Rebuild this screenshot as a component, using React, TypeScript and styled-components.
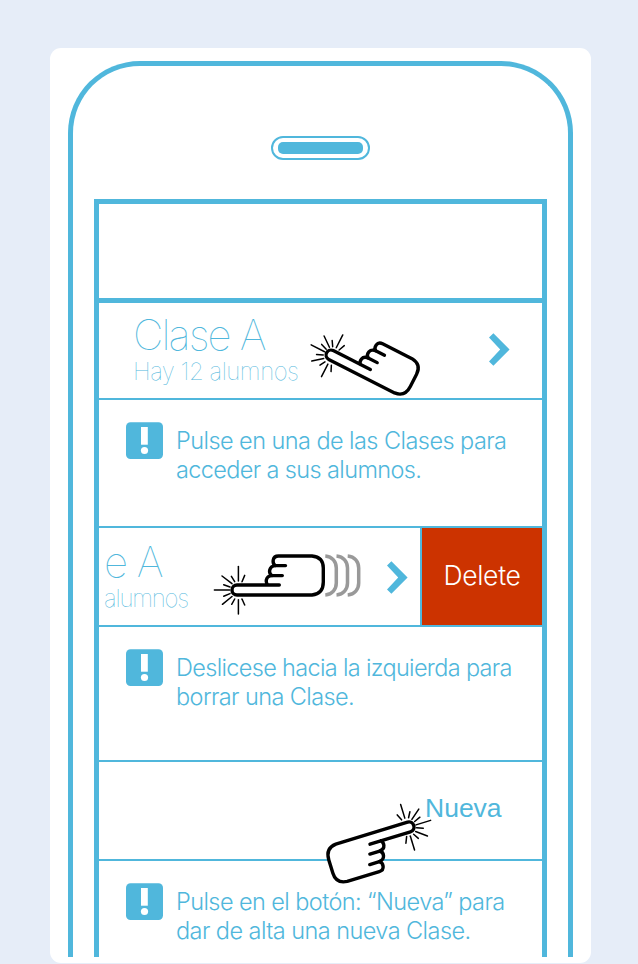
import React from "react";
import styled, { createGlobalStyle } from "styled-components";

const BLUE = "#50b7dc";

const GlobalStyle = createGlobalStyle`
  *, *::before, *::after { box-sizing: border-box; }
  html, body { margin: 0; padding: 0; background: #e6edf8; }
  body { font-family: Inter, "Liberation Sans", sans-serif; color: ${BLUE}; }
`;

const Page = styled.main`
  width: 638px;
  height: 964px;
  padding: 48px 47px 1px 50px;
  background: #e6edf8;
  overflow: hidden;
`;

const Card = styled.section`
  height: 915px;
  padding: 13px 18px 0;
  background: #fff;
  border-radius: 11px;
`;

const Phone = styled.div`
  display: flex;
  flex-direction: column;
  height: 896px;
  padding: 70px 21px 0;
  border: 5px solid ${BLUE};
  border-bottom: 0;
  border-radius: 72px 72px 0 0;
`;

const Speaker = styled.div`
  align-self: center;
  width: 99px;
  height: 24px;
  padding: 4px 5px;
  border: 2px solid ${BLUE};
  border-radius: 12px;
  &::before {
    content: "";
    display: block;
    height: 12px;
    border-radius: 5px;
    background: ${BLUE};
  }
`;

const Screen = styled.div`
  flex: 1;
  margin-top: 39px;
  border: 5px solid ${BLUE};
  border-bottom: 0;
`;

const NavBar = styled.header`
  height: 99px;
  border-bottom: 5px solid ${BLUE};
`;

const Row = styled.div<{ $height: number; $indent?: number }>`
  position: relative;
  display: flex;
  height: ${(p) => p.$height}px;
  padding-left: ${(p) => p.$indent ?? 0}px;
  border-bottom: 2px solid ${BLUE};
`;

const Labels = styled.div`
  flex: 1;
  white-space: nowrap;
`;

const Title = styled.h2<{ $top: number; $spacing: number }>`
  margin: ${(p) => p.$top}px 0 0;
  font-size: 42px;
  line-height: 42px;
  font-weight: 100;
  letter-spacing: ${(p) => p.$spacing}px;
`;

const Subtitle = styled.p<{ $spacing: number }>`
  margin: 2px 0 0;
  font-size: 24px;
  line-height: 28px;
  font-weight: 100;
  letter-spacing: ${(p) => p.$spacing}px;
`;

const ChevronIcon = styled.svg<{ $top: number; $right: number }>`
  flex: none;
  width: 21px;
  height: 33px;
  margin: ${(p) => p.$top}px ${(p) => p.$right}px 0 0;
  fill: ${BLUE};
`;

const DeleteButton = styled.button`
  width: 122px;
  height: 97px;
  padding: 0 0 4px;
  border: 0;
  border-left: 2px solid ${BLUE};
  background: #cc3300;
  color: #fff;
  font: 300 26.5px/30px Inter, "Liberation Sans", sans-serif;
  letter-spacing: -0.3px;
`;

const NewButton = styled.button`
  margin: 30px 0 0;
  padding: 0;
  height: 32px;
  border: 0;
  background: none;
  color: ${BLUE};
  font: 400 26.5px/32px "Liberation Sans", sans-serif;
`;

const Tip = styled.div<{ $height: number; $last?: boolean }>`
  display: flex;
  gap: 13px;
  height: ${(p) => p.$height}px;
  padding: 22px 0 0 27px;
  border-bottom: ${(p) => (p.$last ? "0" : `2px solid ${BLUE}`)};
`;

const AlertIcon = styled.svg`
  flex: none;
  width: 37px;
  height: 37px;
`;

const TipText = styled.p`
  margin: 4px 0 0;
  font-size: 23.5px;
  line-height: 29px;
  font-weight: 300;
  white-space: nowrap;
`;

const Line = styled.span<{ $spacing: number }>`
  display: block;
  letter-spacing: ${(p) => p.$spacing}px;
`;

const HandIcon = styled.svg<{ $x: number; $y: number }>`
  position: absolute;
  left: ${(p) => p.$x - 100}px;
  top: ${(p) => p.$y - 60}px;
  width: 240px;
  height: 120px;
  overflow: visible;
  pointer-events: none;
  z-index: 1;
`;

const rays: number[][] = [
  [-22.6, 0, -7.3, 0], [1.4, -23.6, 1.4, -9], [1.4, 9.7, 1.4, 24],
  [-15, -14, -5, -6.3], [-14.6, 14.3, -5, 6.5], [-5.6, -13.6, -2.3, -8.3],
  [7.7, -14.6, 5, -8.3], [-13.3, -5.3, -7, -3], [-13.3, 6.2, -7, 3.6],
  [-5.3, 14.3, -2.3, 9], [5, 9, 7.7, 15],
];

interface HandProps {
  x: number;
  y: number;
  angle: number;
  scale?: number;
  swipe?: boolean;
}

function Hand({ x, y, angle, scale = 1, swipe }: HandProps) {
  return (
    <HandIcon $x={x} $y={y} viewBox="-100 -60 240 120" aria-hidden="true">
      <g transform={`rotate(${angle}) scale(${scale})`} fill="none" strokeLinecap="round" strokeLinejoin="round">
        <path
          d="M42.3-5H0a5 5 0 0 0 0 10H75Q86.3 4 86.3-8V-22Q86.3-33 75-34H41.5C35-34 35-26.5 38.5-24.4C32-24 31-17 35-14.4C28-14 28.5-7 31-5"
          fill="#fff"
          stroke="#000"
          strokeWidth="3.4"
        />
        <path d="M38.5-24.4H48.5M35-14.4H45.3" stroke="#000" strokeWidth="3.4" />
        <g stroke="#000" strokeWidth="1.5">
          {rays.map(([x1, y1, x2, y2], i) => (
            <line key={i} x1={x1} y1={y1} x2={x2} y2={y2} />
          ))}
        </g>
        {swipe && (
          <g stroke="#999" strokeWidth="3.5" strokeLinecap="butt">
            {[88.3, 99.5, 110.7].map((left) => (
              <path key={left} d={`M${left}-34C${left + 7}-33.5 ${left + 11}-28 ${left + 11}-22V-7C${left + 11}-1 ${left + 7} 4.5 ${left} 5`} />
            ))}
          </g>
        )}
      </g>
    </HandIcon>
  );
}

function Chevron({ top, right }: { top: number; right: number }) {
  return (
    <ChevronIcon $top={top} $right={right} viewBox="0 0 21 33">
      <path d="M4.4.2 20.6 16.5 4.4 32.8 0 28.6 11.2 16.5 0 4.4Z" />
    </ChevronIcon>
  );
}

function Notice({ height, last, lines }: { height: number; last?: boolean; lines: [string, number][] }) {
  return (
    <Tip $height={height} $last={last}>
      <AlertIcon viewBox="0 0 37 37">
        <rect y=".3" width="37" height="36.7" rx="4.5" fill={BLUE} />
        <rect x="15" y="5" width="6.8" height="17.7" fill="#fff" />
        <circle cx="18.5" cy="28.5" r="3.6" fill="#fff" />
      </AlertIcon>
      <TipText>
        {lines.map(([text, spacing]) => (
          <Line key={text} $spacing={spacing}>{text}</Line>
        ))}
      </TipText>
    </Tip>
  );
}

export default function App() {
  return (
    <>
      <GlobalStyle />
      <Page>
        <Card>
          <Phone>
            <Speaker />
            <Screen>
              <NavBar />
              <Row $height={97} $indent={34}>
                <Labels>
                  <Title $top={11} $spacing={-1.9}>Clase A</Title>
                  <Subtitle $spacing={-0.5}>Hay 12 alumnos</Subtitle>
                </Labels>
                <Chevron top={30} right={32} />
                <Hand x={232.3} y={52} angle={27} scale={0.985} />
              </Row>
              <Notice
                height={128}
                lines={[["Pulse en una de las Clases para", -0.56], ["acceder a sus alumnos.", -0.63]]}
              />
              <Row $height={99} $indent={5}>
                <Labels>
                  <Title $top={13} $spacing={-1.6}>e A</Title>
                  <Subtitle $spacing={-1.2}>alumnos</Subtitle>
                </Labels>
                <Chevron top={33} right={12} />
                <DeleteButton>Delete</DeleteButton>
                <Hand x={137.7} y={61.7} angle={0} swipe />
              </Row>
              <Notice
                height={135}
                lines={[["Deslicese hacia la izquierda para", -0.67], ["borrar una Clase.", -0.6]]}
              />
              <Row $height={99} $indent={326}>
                <NewButton>Nueva</NewButton>
                <Hand x={310.2} y={64.6} angle={163} />
              </Row>
              <Notice
                height={96}
                last
                lines={[["Pulse en el botón: “Nueva” para", -0.58], ["dar de alta una nueva Clase.", -0.56]]}
              />
            </Screen>
          </Phone>
        </Card>
      </Page>
    </>
  );
}
